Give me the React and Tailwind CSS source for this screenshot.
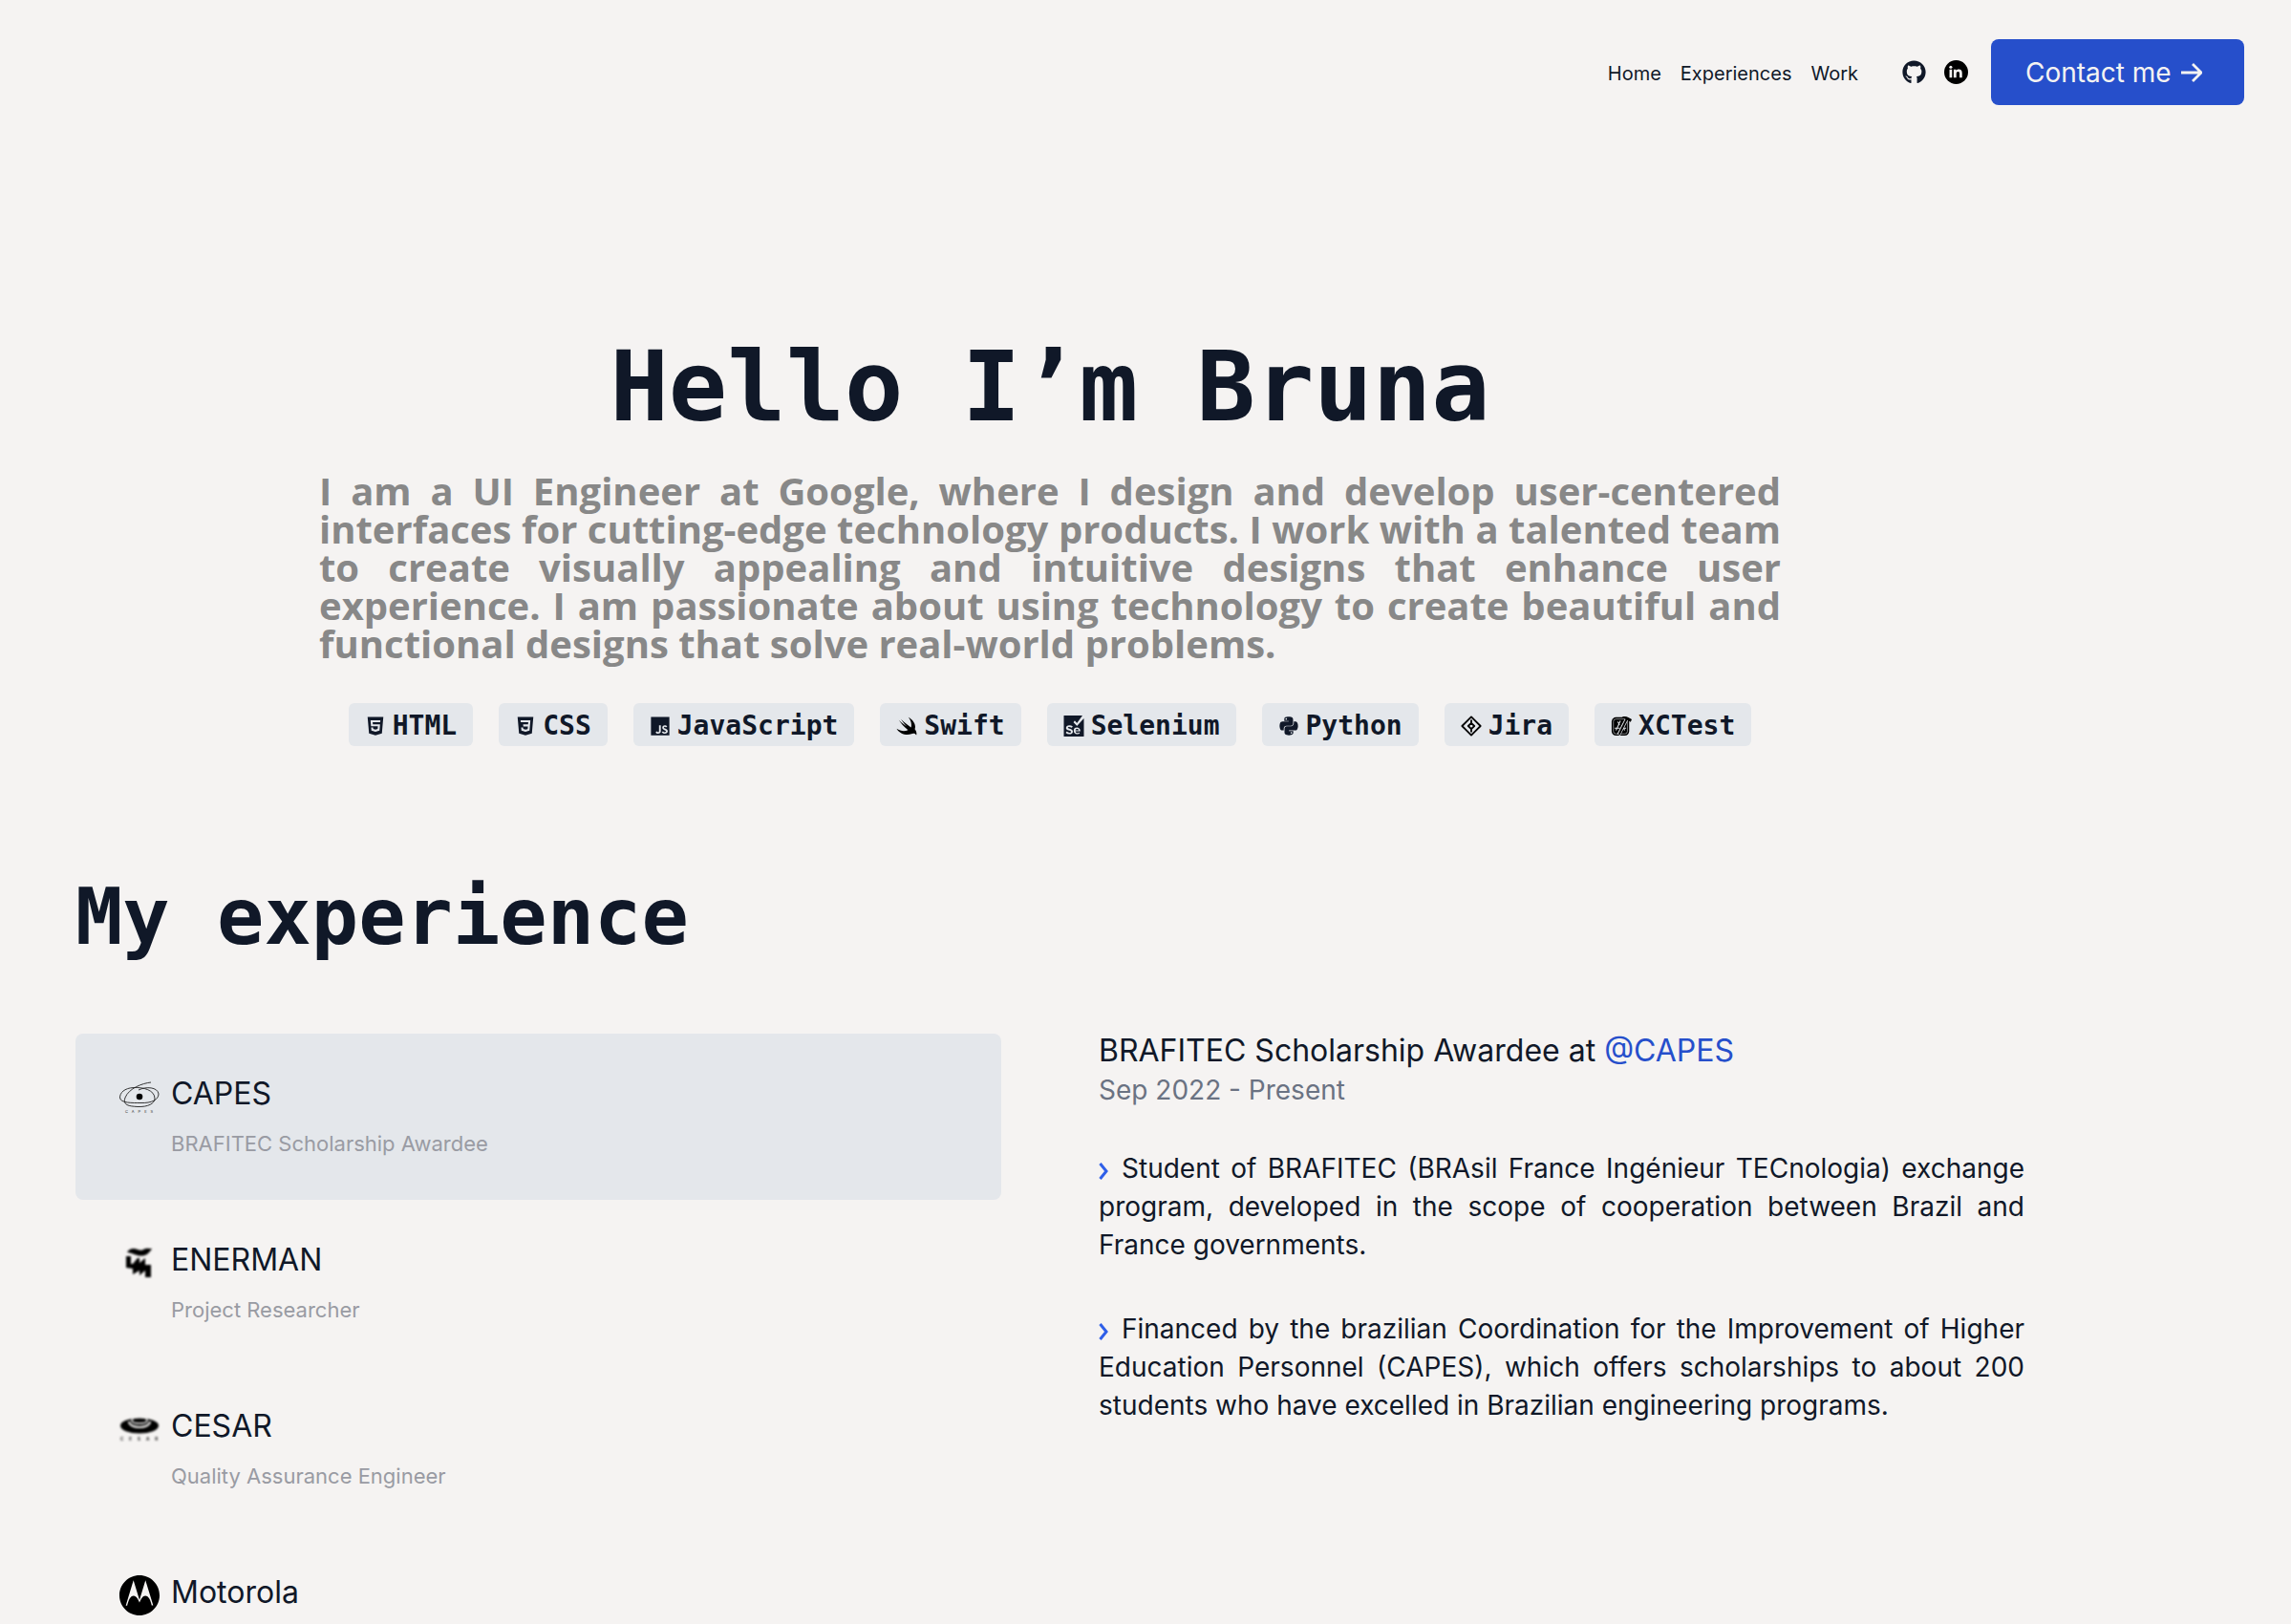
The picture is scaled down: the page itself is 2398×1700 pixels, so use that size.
import { FaGithub, FaPython } from "react-icons/fa";
import { IoLogoHtml5, IoLogoCss3, IoLogoJavascript } from "react-icons/io5";
import { SiSelenium, SiMotorola } from "react-icons/si";

const mono = "font-['DejaVu_Sans_Mono',monospace] font-bold";

function LinkedIn({ className }) {
  return (
    <svg viewBox="0 0 24 24" className={className} aria-hidden="true">
      <circle cx="12" cy="12" r="12" fill="#000" />
      <g fill="#f5f3f2">
        <circle cx="6.6" cy="7" r="1.5" />
        <path d="M5.300 9.400h2.600v8H5.300zM9.500 9.400H12v1.200c.5-.9 1.400-1.400 2.600-1.400 2.300 0 3.400 1.400 3.400 3.700v4.500h-2.600v-4.100c0-1.200-.4-1.900-1.400-1.900-1.100 0-1.800.7-1.800 2v4H9.500z" />
      </g>
    </svg>
  );
}

function Swift({ className }) {
  return (
    <svg viewBox="0 0 24 24" className={className} fill="#000" aria-hidden="true">
      <path d="M14 2C20 5.500 23 11 21.300 15.500 23.600 18.500 23.600 21 23 22.300 21.500 20 19 20.300 17.500 21 12 23.300 4 21 .5 15c4.500 3 9.500 3.500 13 1.500C9 13 5.500 9 3 5.200 6.500 8.500 10 11.200 12 12.300 9.500 9.500 7 6.500 5.500 4c4 4 8.500 7.500 11.500 9.500C18 10 17 6 14 2z" />
    </svg>
  );
}

function Jira({ className }) {
  return (
    <svg viewBox="0 0 24 24" className={className} fill="none" stroke="#000" strokeWidth="2" strokeLinejoin="round" aria-hidden="true">
      <path d="M12 1.500 22.500 12 12 22.500 1.500 12z" />
      <path d="M12 8.500 15.500 12 12 15.500 8.500 12z" />
      <path d="M12 5v3.500M12 15.500V19" />
    </svg>
  );
}

function XCTest({ className }) {
  return (
    <svg viewBox="0 0 24 24" className={className} fill="none" aria-hidden="true">
      <rect x="1" y="2" width="20" height="21" rx="5" fill="#000" />
      <rect x="3" y="4" width="16" height="17" rx="3" stroke="#e4e7eb" strokeWidth=".6" />
      <path d="M11 6 6 17M4.500 14.500h6M12 14.500h5.500M12.500 11l3.500 6M8 7l2 4" stroke="#e4e7eb" strokeWidth="1.100" />
      <path d="M18.500 3.500 9 22" stroke="#e4e7eb" strokeWidth="4" />
      <path d="M18.500 3.500 9.500 21.500" stroke="#000" strokeWidth="2.200" />
      <path d="M13 1.500c3-1 5-.5 7 .8l4 2-1.300 3L18 5z" fill="#000" />
    </svg>
  );
}

function Capes({ className }) {
  return (
    <svg viewBox="0 0 42 42" className={className} fill="none" stroke="#222" strokeWidth="0.900" aria-hidden="true">
      <path d="M33 6C24 7 10 12 6 22c-3 8 4 9 13 9.500 11 .5 18-3.500 18-8.500 0-9-12-12-22-11.500C5 12 .5 17 .5 22 1 28 14 27.500 22 27.500 34 28 41 24 41 18 40 11 28 10 20 14" />
      <circle cx="21" cy="21" r="3.300" fill="#000" stroke="none" />
      <text x="6" y="37.500" fontSize="4" letterSpacing="4" fill="#333" stroke="none" fontFamily="Inter, sans-serif">CAPES</text>
    </svg>
  );
}

function Enerman({ className }) {
  return (
    <svg viewBox="0 0 42 42" className={`${className} blur-[1px]`} fill="#000" aria-hidden="true">
      <path d="M8 10c2-4 7-5 11-3 3 1 5 1 7-.5 3-1.500 6 0 8-.5-3 5-6 7.500-11 7.500-5 .5-9-3-15-3.500z" />
      <path d="M7 14h5v8h2l5-6h2v5l6-5v7h6v13h-6v-7l-6 5v-5l-7 4v-6l-7-1z" />
    </svg>
  );
}

function Cesar({ className }) {
  return (
    <svg viewBox="0 0 42 42" className={`${className} blur-[1px]`} fill="none" aria-hidden="true">
      <ellipse cx="21" cy="17.500" rx="20" ry="8" fill="#000" />
      <path d="M10 13c0 8 22 8 22 0" stroke="#f5f3f2" strokeWidth="2" />
      <path d="M13 12c0-2 2-3.500 8-3.500s8 1.500 8 3.500-3 3-8 3-8-1-8-3z" stroke="#f5f3f2" strokeWidth="1.500" />
      <text x="1" y="32.500" fontSize="4.500" fontWeight="700" letterSpacing="6" fill="#222" fontFamily="Inter, sans-serif">CESAR</text>
    </svg>
  );
}

const skills = [
  ["HTML", IoLogoHtml5],
  ["CSS", IoLogoCss3],
  ["JavaScript", IoLogoJavascript],
  ["Swift", Swift],
  ["Selenium", SiSelenium],
  ["Python", FaPython],
  ["Jira", Jira],
  ["XCTest", XCTest],
];

const jobs = [
  ["CAPES", "BRAFITEC Scholarship Awardee", Capes],
  ["ENERMAN", "Project Researcher", Enerman],
  ["CESAR", "Quality Assurance Engineer", Cesar],
  ["Motorola", "", SiMotorola],
];

const details = [
  "Student of BRAFITEC (BRAsil France Ingénieur TECnologia) exchange program, developed in the scope of cooperation between Brazil and France governments.",
  "Financed by the brazilian Coordination for the Improvement of Higher Education Personnel (CAPES), which offers scholarships to about 200 students who have excelled in Brazilian engineering programs.",
];

function Chevron() {
  return (
    <svg viewBox="0 0 10 18" className="mr-3.5 inline-block h-[18px] w-[10px] align-[-2px]" fill="none" stroke="#2f5fe8" strokeWidth="3" aria-hidden="true">
      <path d="M1.500 1 8 9l-6.500 8" />
    </svg>
  );
}

export default function App() {
  return (
    <div className="h-screen overflow-hidden bg-[#f5f3f2] font-[Inter,sans-serif] text-gray-900">
      <header className="flex items-center justify-end pt-[41px] pr-[49px]">
        <nav className="flex gap-5 pt-0.5 text-[20px] leading-7">
          <a href="#home">Home</a>
          <a href="#experiences">Experiences</a>
          <a href="#work">Work</a>
        </nav>
        <div className="mr-6 ml-[46px] flex gap-[19px]">
          <a href="#github" aria-label="GitHub"><FaGithub className="size-[25px]" /></a>
          <a href="#linkedin" aria-label="LinkedIn"><LinkedIn className="size-[25px]" /></a>
        </div>
        <button type="button" className="flex h-[69px] w-[265px] items-center gap-2.5 rounded-lg bg-[#264fcb] pl-9 text-[28px] text-[#f5f3f2]">
          Contact me
          <svg viewBox="0 0 22 20" className="h-5 w-[22px]" fill="none" stroke="currentColor" strokeWidth="2.800" aria-hidden="true">
            <path d="M0 10h20M12 1l9 9-9 9" />
          </svg>
        </button>
      </header>

      <main className="pr-[279px] pl-[79px]">
        <section id="home" className="mx-auto flex max-w-[1530px] flex-col items-center pt-[230px]">
          <h1 className={`${mono} text-[102px] leading-[130px]`}>Hello I’m Bruna</h1>
          <p className="mt-6 text-justify font-['Open_Sans',sans-serif] text-[40px] leading-10 font-bold text-[#888]">
            I am a UI Engineer at Google, where I design and develop user-centered interfaces for cutting-edge technology products. I work with a talented team to create visually appealing and intuitive designs that enhance user experience. I am passionate about using technology to create beautiful and functional designs that solve real-world problems.
          </p>
          <ul className="mt-[42px] flex gap-[27px]">
            {skills.map(([name, Icon]) => (
              <li key={name} className={`${mono} flex h-[45px] items-center gap-[7px] rounded-md bg-[#e4e7eb] px-[17px] pt-0.5 text-[28px] leading-[43px]`}>
                <Icon className="size-[22px]" />
                {name}
              </li>
            ))}
          </ul>
        </section>

        <section id="experiences" className="pt-[119px]">
          <h2 className={`${mono} text-[82px] leading-[120px]`}>My experience</h2>
          <div className="mt-[62px] grid grid-cols-2 gap-[102px]">
            <div>
              {jobs.map(([name, role, Logo], i) => (
                <button key={name} type="button" className={`${i === 0 ? "bg-[#e4e7eb]" : ""} flex h-[174px] w-full items-start gap-3 rounded-lg pt-[43px] pl-[46px] text-left`}>
                  <Logo className="mt-0.5 size-[42px] text-black" aria-hidden="true" />
                  <span className="block">
                    <span className="block text-[32px] leading-10">{name}</span>
                    {role && <span className="mt-4 block text-[22px] leading-8 text-[#999ba3]">{role}</span>}
                  </span>
                </button>
              ))}
            </div>
            <div>
              <h3 className="text-[32px] leading-9">
                BRAFITEC Scholarship Awardee at <a href="#capes" className="text-[#264fcb]">@CAPES</a>
              </h3>
              <p className="mt-[3px] text-[28px] leading-10 text-gray-500">Sep 2022 - Present</p>
              {details.map((text, i) => (
                <p key={i} className={`${i === 0 ? "mt-[42px]" : "mt-12"} text-justify text-[28px] leading-10`}>
                  <Chevron />
                  {text}
                </p>
              ))}
            </div>
          </div>
        </section>
      </main>
    </div>
  );
}
